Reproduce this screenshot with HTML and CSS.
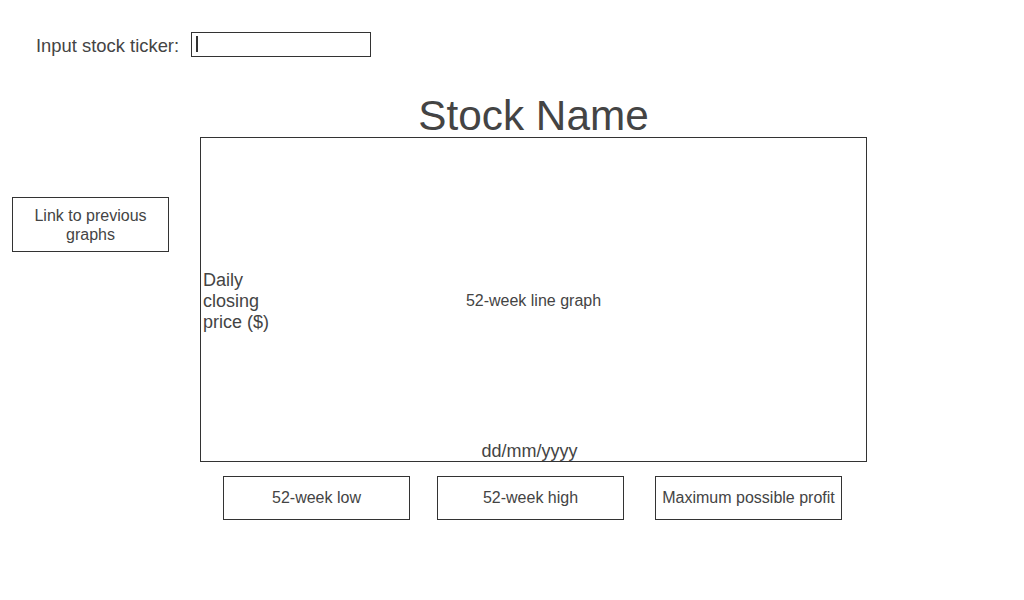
FILE: index.html
```html
<!DOCTYPE html>
<html lang="en">
<head>
<meta charset="utf-8">
<title>Stock Viewer</title>
<link rel="stylesheet" href="styles.css">
</head>
<body>
  <header class="ticker-row">
    <label class="ticker-label" for="ticker">Input stock ticker:</label>
    <div class="ticker-field" id="ticker" role="textbox"><span class="caret"></span></div>
  </header>

  <main class="layout">
    <aside class="sidebar">
      <a class="history-link" href="#">Link to previous graphs</a>
    </aside>

    <section class="content">
      <h1 class="stock-name">Stock Name</h1>
      <div class="chart">
        <div class="axis-y">Daily closing price ($)</div>
        <div class="chart-label">52-week line graph</div>
        <div class="axis-x">dd/mm/yyyy</div>
      </div>
      <div class="stats">
        <div class="stat">52-week low</div>
        <div class="stat">52-week high</div>
        <div class="stat stat-wide-gap">Maximum possible profit</div>
      </div>
    </section>
  </main>
</body>
</html>
```

FILE: styles.css
```css
* {
  box-sizing: border-box;
}

body {
  margin: 0;
  background: #ffffff;
  color: #444444;
  font-family: "Liberation Sans", Arial, sans-serif;
}

/* Ticker input row */
.ticker-row {
  display: flex;
  align-items: flex-start;
  padding: 32px 0 0 36px;
}

.ticker-label {
  font-size: 18.4px;
  line-height: 21px;
  margin-top: 3px;
}

.ticker-field {
  width: 180px;
  height: 25px;
  margin-left: 12px;
  border: 1px solid #333333;
  padding: 3px 0 0 4px;
}

.caret {
  display: block;
  width: 2px;
  height: 16px;
  background: #333333;
}

/* Main two-column layout */
.layout {
  display: flex;
  margin-top: 38px;
}

.sidebar {
  width: 200px;
  padding-left: 12px;
}

.history-link {
  display: flex;
  align-items: center;
  justify-content: center;
  width: 157px;
  height: 55px;
  margin-top: 102px;
  border: 1px solid #333333;
  color: #444444;
  text-decoration: none;
  text-align: center;
  font-size: 16px;
  line-height: 19px;
  padding: 0 10px;
}

.content {
  width: 667px;
}

.stock-name {
  margin: 0;
  font-size: 42.3px;
  line-height: 42px;
  font-weight: normal;
  text-align: center;
}

/* Chart frame */
.chart {
  display: grid;
  grid-template-columns: 1fr auto 1fr;
  grid-template-rows: 1fr auto 1fr;
  height: 325px;
  border: 1px solid #333333;
}

.axis-y {
  grid-column: 1;
  grid-row: 2;
  justify-self: start;
  max-width: 80px;
  padding-left: 2px;
  font-size: 18px;
  line-height: 21px;
  margin-top: 4px;
}

.chart-label {
  grid-column: 2;
  grid-row: 2;
  align-self: center;
  font-size: 16px;
  margin-top: 2px;
}

.axis-x {
  grid-column: 1 / 4;
  grid-row: 3;
  align-self: end;
  justify-self: center;
  margin-right: 8px;
  font-size: 18px;
  line-height: 21px;
  margin-bottom: -1px;
}

/* Summary boxes */
.stats {
  display: flex;
  gap: 27px;
  padding-left: 23px;
  margin-top: 14px;
}

.stat {
  display: flex;
  align-items: center;
  justify-content: center;
  width: 187px;
  height: 44px;
  border: 1px solid #333333;
  font-size: 16px;
  white-space: nowrap;
}

.stat-wide-gap {
  margin-left: 4px;
}
```
